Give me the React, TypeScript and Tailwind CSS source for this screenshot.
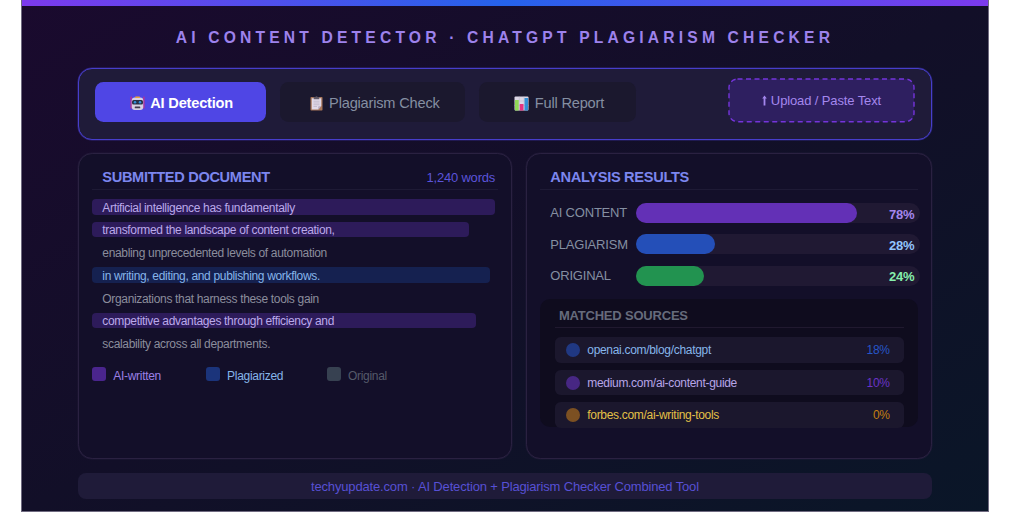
const documentLines = [
  { text: 'Artificial intelligence has fundamentally', bar: 'w-[402.5px] bg-[#2d1b5a] text-[#bba9ea]' },
  { text: 'transformed the landscape of content creation,', bar: 'w-[376.9px] bg-[#2d1b5a] text-[#bba9ea]' },
  { text: 'enabling unprecedented levels of automation', bar: 'w-[402.5px] text-[#8b8d9c]' },
  { text: 'in writing, editing, and publishing workflows.', bar: 'w-[398.2px] bg-[#152150] text-[#86b5ea]' },
  { text: 'Organizations that harness these tools gain', bar: 'w-[402.5px] text-[#8b8d9c]' },
  { text: 'competitive advantages through efficiency and', bar: 'w-[384px] bg-[#2d1b5a] text-[#bba9ea]' },
  { text: 'scalability across all departments.', bar: 'w-[402.5px] text-[#8b8d9c]' },
];

const legend = [
  { label: 'AI-written', item: 'w-[113.8px] text-[#9b80e6]', swatch: 'bg-[#4a258d]' },
  { label: 'Plagiarized', item: 'w-[120.9px] text-[#86b5ea]', swatch: 'bg-[#1b347b]' },
  { label: 'Original', item: 'text-[#555a69]', swatch: 'bg-[#374151]' },
];

const results = [
  { label: 'AI CONTENT', value: 78, fill: 'bg-[#6330b6]', text: 'text-[#a487ee]' },
  { label: 'PLAGIARISM', value: 28, fill: 'bg-[#244fb8]', text: 'text-[#93c5fd]' },
  { label: 'ORIGINAL', value: 24, fill: 'bg-[#229350]', text: 'text-[#86efac]' },
];

const sources = [
  { name: 'openai.com/blog/chatgpt', share: '18%', dot: 'bg-[#203882]', text: 'text-[#86b5ea]', shareText: 'text-[#2656c8]' },
  { name: 'medium.com/ai-content-guide', share: '10%', dot: 'bg-[#472783]', text: 'text-[#b7a5e8]', shareText: 'text-[#6a33c6]' },
  { name: 'forbes.com/ai-writing-tools', share: '0%', dot: 'bg-[#7c5022]', text: 'text-[#e3c047]', shareText: 'text-[#c47f10]' },
];

const RobotIcon = () => (
  <svg width="15" height="15" viewBox="0 0 30 30">
    <rect x="1" y="1" width="2.5" height="24" rx="1" fill="#c52f86" />
    <rect x="26.5" y="1" width="2.5" height="24" rx="1" fill="#c52f86" />
    <rect x="3.5" y="3" width="23" height="25" rx="6" fill="#d6d0e4" />
    <rect x="10" y="1" width="10" height="3" rx="1.5" fill="#eba43c" />
    <rect x="4" y="8" width="22" height="9" rx="3" fill="#273049" />
    <circle cx="10" cy="12.5" r="2.5" fill="#3390dd" />
    <circle cx="20" cy="12.5" r="2.5" fill="#3390dd" />
    <rect x="9.5" y="21" width="11" height="3.5" rx="1" fill="#433b50" />
  </svg>
);

const ClipboardIcon = () => (
  <svg width="13" height="15" viewBox="0 0 26 30">
    <rect x="1" y="2" width="24" height="27" rx="1.5" fill="#a77558" />
    <path d="M3.5 4.5h19V20l-6 7h-13z" fill="#e1d9e8" />
    <path d="M22.5 20l-6 7v-6z" fill="#b5a8bd" />
    <path d="M7.5 2h3q2.5-3 5 0h3v4.5h-11z" fill="#605967" />
    <path d="M7 10.5h12M7 14h12M7 17.5h12M7 21h7" stroke="#b3a9bd" strokeWidth="1.2" />
  </svg>
);

const ChartIcon = () => (
  <svg width="15" height="15" viewBox="0 0 30 30">
    <rect x="1" y="1" width="28" height="28" rx="2" fill="#ddd7e6" />
    <path d="M1 10h28M1 19h28M10.5 1v28M20 1v28" stroke="#bcb4c9" strokeWidth="1" />
    <rect x="2" y="8" width="7.5" height="21" fill="#91d957" />
    <rect x="11.5" y="16" width="7.5" height="13" fill="#e53480" />
    <rect x="21" y="4" width="7" height="25" fill="#348fd6" />
  </svg>
);

const Toolbar = () => (
  <div className="flex h-[72px] items-start rounded-[14px] border border-[#473ecb] bg-[#1f1b39] pl-[16px] text-[14.6px] tracking-[-0.19px] shadow-[0_0_0_0.5px_#473ecb80]">
    <div className="mt-[13px] flex h-[40px] w-[170.7px] items-center justify-center gap-[5px] rounded-[8.5px] bg-[#4f46e5] pt-[2px] pl-[2px] font-bold text-white">
      <RobotIcon />
      <span className="pt-[2px]">AI Detection</span>
    </div>
    <div className="mt-[13px] ml-[14.2px] flex h-[40px] w-[184.9px] items-center justify-center gap-[6.5px] rounded-[8.5px] bg-[#1b182e] pt-[2px] pl-[4px] text-[#858fa2]">
      <ClipboardIcon />
      <span className="pt-[2px]">Plagiarism Check</span>
    </div>
    <div className="mt-[13px] ml-[14.2px] flex h-[40px] w-[156.4px] items-center justify-center gap-[6px] rounded-[8.5px] bg-[#1b182e] pt-[2px] pl-[3px] text-[#858fa2]">
      <ChartIcon />
      <span className="pt-[2px]">Full Report</span>
    </div>
    <div className="relative mt-[10px] ml-[93.4px] flex h-[42.7px] w-[184.9px] items-center justify-center pt-[1px] text-[13px] tracking-[-0.12px] text-[#a487ee]">
      <svg className="absolute inset-0 h-full w-full overflow-visible">
        <rect x="0" y="0" width="185" height="42.7" rx="8.5" fill="#2e1f60" stroke="#7434da" strokeWidth="1.4" strokeDasharray="5 3.5" />
      </svg>
      <svg className="relative mr-[4px]" width="5" height="11" viewBox="0 0 5 11">
        <path d="M2.5 0.5L4.8 3.5H3.4V10.5H1.6V3.5H0.2z" fill="#a487ee" />
      </svg>
      <span className="relative">Upload / Paste Text</span>
    </div>
  </div>
);

const SubmittedDocument = () => (
  <section className="h-[306px] w-[433.8px] rounded-[14.2px] border border-[#2a2141] bg-[#130f29] px-[13px] shadow-[0_0_0_0.5px_#2a214180]">
    <div className="flex h-[36px] items-center justify-between border-b border-[#1e1a35] pt-[12px] pr-[3px] pl-[10px]">
      <h2 className="text-[14.6px] font-bold tracking-[-0.33px] text-[#7c86ee]">SUBMITTED DOCUMENT</h2>
      <span className="text-[13px] tracking-[-0.2px] text-[#5b54da]">1,240 words</span>
    </div>
    <div className="mt-[8.7px] flex flex-col gap-[7.11px]">
      {documentLines.map((line) => (
        <div
          key={line.text}
          className={`flex h-[15.65px] items-center rounded-[4px] pt-[2px] pl-[10px] text-[12px] tracking-[-0.33px] whitespace-nowrap ${line.bar}`}
        >
          {line.text}
        </div>
      ))}
    </div>
    <div className="mt-[15.8px] flex text-[12px] tracking-[-0.3px]">
      {legend.map((entry) => (
        <div key={entry.label} className={`flex h-[14px] items-center gap-[7px] ${entry.item}`}>
          <span className={`h-[14px] w-[14px] rounded-[3px] ${entry.swatch}`} />
          <span className="pt-[4px]">{entry.label}</span>
        </div>
      ))}
    </div>
  </section>
);

const AnalysisResults = () => (
  <section className="h-[306px] w-[405.3px] rounded-[14.2px] border border-[#2a2141] bg-[#130f29] pr-[11px] pl-[13px] shadow-[0_0_0_0.5px_#2a214180]">
    <div className="mr-[2px] flex h-[36px] items-center border-b border-[#1e1a35] pt-[12px] pl-[10px]">
      <h2 className="text-[14.6px] font-bold tracking-[-0.3px] text-[#7c86ee]">ANALYSIS RESULTS</h2>
    </div>
    <div className="mt-[13px] flex flex-col gap-[11.3px] pl-[10px]">
      {results.map((result) => (
        <div key={result.label} className="flex h-5 items-center text-[13px] tracking-[-0.2px]">
          <span className="w-[85.3px] text-[#858fa2]">{result.label}</span>
          <div className="relative h-5 w-[284.4px] rounded-full bg-[#201933]">
            <div className={`h-5 rounded-full ${result.fill}`} style={{ width: `${result.value}%` }} />
            <span className={`absolute top-[1.5px] right-[5.2px] leading-5 font-bold ${result.text}`}>
              {result.value}%
            </span>
          </div>
        </div>
      ))}
    </div>
    <div className="mt-[13px] mr-[2px] h-[128px] rounded-[10px] bg-[#0f0c1e] pr-[13.8px] pl-[14.6px]">
      <h3 className="h-[29px] border-b border-[#20192f] pt-[7px] pl-[4px] text-[13px] leading-5 font-bold tracking-[-0.2px] text-[#666b7c]">
        MATCHED SOURCES
      </h3>
      <div className="mt-[9.3px] flex flex-col gap-[7.1px]">
        {sources.map((source) => (
          <div
            key={source.name}
            className="flex h-[25.6px] shrink-0 items-center rounded-[5.7px] bg-[#1b172d] pr-[14.2px] pl-[11.4px] text-[12px] tracking-[-0.31px]"
          >
            <span className={`mr-[7px] h-[14px] w-[14px] rounded-full ${source.dot}`} />
            <span className={source.text}>{source.name}</span>
            <span className={`ml-auto ${source.shareText}`}>{source.share}</span>
          </div>
        ))}
      </div>
    </div>
  </section>
);

export default function App() {
  return (
    <div className="h-[526px] overflow-hidden bg-white pl-[21px] font-['Liberation_Sans',Arial,sans-serif]">
      <main className="h-[512px] w-[968px] border-x border-b border-[#6f6a80] bg-[linear-gradient(to_bottom_right,#1a0a2e_0%,#120f28_50%,#0a1628_100%)]">
        <div className="h-[5.5px] bg-[linear-gradient(90deg,#7c3aed,#2563eb,#7c3aed)]" />
        <div className="pl-[56.3px]">
          <div className="w-[853.3px]">
            <h1 className="pt-[20px] pb-[19.5px] text-center text-[15.64px] leading-[23px] font-bold tracking-[4.18px] whitespace-nowrap text-[#9d82ec]">
              AI CONTENT DETECTOR · CHATGPT PLAGIARISM CHECKER
            </h1>
            <Toolbar />
            <div className="mt-[13.2px] flex justify-between">
              <SubmittedDocument />
              <AnalysisResults />
            </div>
            <footer className="mt-[14px] flex h-[26px] items-center justify-center rounded-[8px] bg-[#1f1b39] pt-[1px] text-[13px] tracking-[-0.16px] text-[#5750d4]">
              techyupdate.com · AI Detection + Plagiarism Checker Combined Tool
            </footer>
          </div>
        </div>
      </main>
    </div>
  );
}
